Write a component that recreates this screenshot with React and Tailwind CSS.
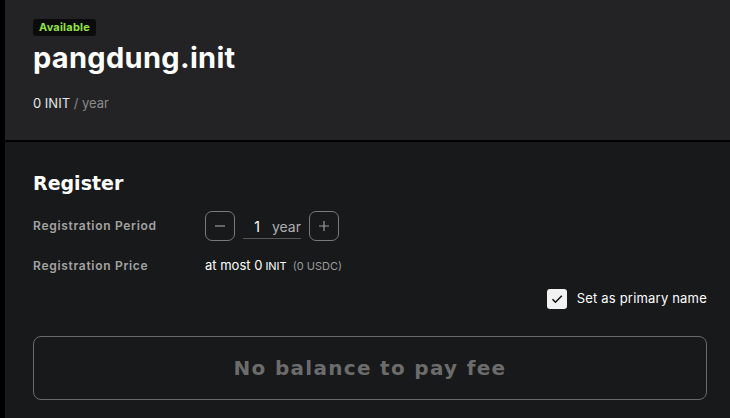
export default function App() {
  const font = { fontFamily: 'Inter, "Liberation Sans", sans-serif' };
  return (
    <div className="w-[730px] h-[418px] bg-black flex overflow-hidden" style={font}>
      <div className="w-[5px] shrink-0 bg-black" />
      <div className="flex-1 flex flex-col">
        <div className="h-[140px] bg-[#232325] pl-[28px] pt-[19px] flex flex-col items-start">
          <div className="h-[17px] px-[6px] rounded-[3px] bg-[#0b0b0b] text-[#92e24a] text-[11px] font-bold flex items-center tracking-[0.2px]">
            Available
          </div>
          <div className="mt-[5px] text-[29px] leading-[34px] font-bold text-white tracking-[0.3px]">pangdung.init</div>
          <div className="mt-[20px] text-[13px] leading-[16px]">
            <span className="text-[#e6e6e6]">0 INIT</span>
            <span className="text-[#8a8a8a]"> / year</span>
          </div>
        </div>
        <div className="h-[2px] bg-black" />
        <div className="flex-1 bg-[#18191a] pl-[28px] pr-[23px] pt-[30px]">
          <div className="text-[19px] leading-[22px] font-bold text-white font-['DejaVu_Sans',sans-serif]">Register</div>
          <div className="mt-[17px] flex items-center h-[30px]">
            <div className="w-[172px] text-[12px] font-semibold text-[#a3a3a3] tracking-[0.7px]">Registration Period</div>
            <button className="w-[30px] h-[30px] rounded-[7px] border border-[#7a7a7a] flex items-center justify-center text-[#9a9a9a]">
              <svg width="12" height="12" viewBox="0 0 12 12"><path d="M1 6h10" stroke="currentColor" strokeWidth="1.2" /></svg>
            </button>
            <div className="mx-[8px] w-[58px] h-[26px] border-b border-[#555] flex items-end justify-end pb-[3px] text-[14px] leading-[16px]">
              <span className="text-white">1</span>
              <span className="ml-[12px] text-[#b0b0b0]">year</span>
            </div>
            <button className="w-[30px] h-[30px] rounded-[7px] border border-[#7a7a7a] flex items-center justify-center text-[#9a9a9a]">
              <svg width="12" height="12" viewBox="0 0 12 12"><path d="M1 6h10M6 1v10" stroke="currentColor" strokeWidth="1.2" /></svg>
            </button>
          </div>
          <div className="mt-[17px] flex items-center h-[16px]">
            <div className="w-[172px] text-[12px] font-semibold text-[#a3a3a3] tracking-[0.7px]">Registration Price</div>
            <div className="text-[13px] text-white flex items-baseline">
              <span>at most 0</span>
              <span className="ml-[3px] text-[11px]">INIT</span>
              <span className="ml-[6px] text-[11px] text-[#9a9a9a]">(0 USDC)</span>
            </div>
          </div>
          <div className="mt-[15px] flex justify-end items-center gap-[10px]">
            <div className="w-[20px] h-[20px] rounded-[3px] bg-[#f2f2f2] flex items-center justify-center">
              <svg width="14" height="14" viewBox="0 0 14 14"><path d="M2.5 7.2l3 3L11.8 3.8" fill="none" stroke="#111" strokeWidth="1.6" /></svg>
            </div>
            <span className="text-[13px] text-white tracking-[0.2px]">Set as primary name</span>
          </div>
          <div className="mt-[27px] h-[64px] rounded-[8px] border border-[#6a6a6a] flex items-center justify-center text-[20px] font-bold text-[#6c6c6c] tracking-[1.3px] font-['DejaVu_Sans',sans-serif]">
            No balance to pay fee
          </div>
        </div>
      </div>
    </div>
  );
}
